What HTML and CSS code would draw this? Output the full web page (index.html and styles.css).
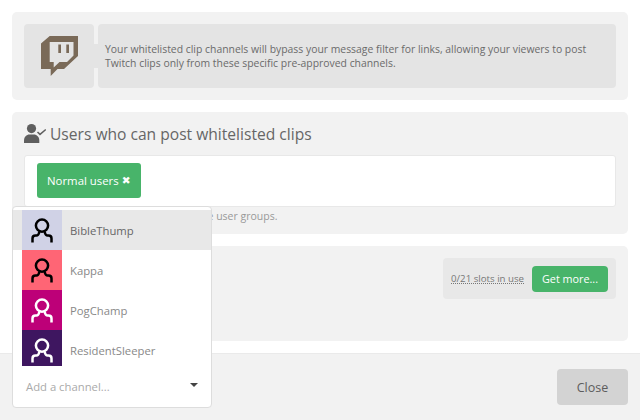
FILE: index.html
```html
<!DOCTYPE html>
<html lang="en">
<head>
<meta charset="utf-8">
<title>Whitelisted clips</title>
<link rel="stylesheet" href="styles.css">
</head>
<body>
<main class="content">
  <section class="card intro">
    <div class="intro-icon">
      <svg class="twitch" viewBox="0 0 37 40" aria-hidden="true">
        <path fill-rule="evenodd" d="M8.7 0H37V20L23 33H16.5L9.7 40V33H0V7.5ZM8.7 6V26H12.7V31.5L18.5 26H26L32.5 19.5V6ZM17.3 8.5H20V17H17.3ZM25.3 8.5H28V17H25.3Z"/>
      </svg>
    </div>
    <span class="intro-link"></span>
    <p class="intro-text">Your whitelisted clip channels will bypass your message filter for links, allowing your viewers to post Twitch clips only from these specific pre-approved channels.</p>
  </section>

  <section class="card users">
    <h2 class="heading">
      <svg class="user-check" viewBox="0 0 22 19" aria-hidden="true">
        <circle cx="7.5" cy="4.6" r="4.6"/>
        <path d="M0 19V16.5C0 13 2.5 10.6 5.5 10.6H9.8C12.8 10.6 15.3 13 15.3 16.5V19Z"/>
        <path class="tick" d="M13.5 8L16 10.4L21.8 5.5"/>
      </svg>
      Users who can post whitelisted clips
    </h2>
    <div class="tag-box">
      <span class="tag">Normal users <span class="tag-x">✖</span></span>
    </div>
    <p class="hint">Only allows clips sent by users in these user groups.</p>
  </section>

  <section class="card channels">
    <div class="slots">
      <span class="slots-text">0/21 slots in use</span>
      <button class="btn-green">Get more...</button>
    </div>
  </section>
</main>

<footer class="footer">
  <button class="btn-close">Close</button>
</footer>

<div class="dropdown">
  <ul class="options">
    <li class="option active">
      <span class="avatar av-1"><svg viewBox="0 0 40 40" aria-hidden="true"><use href="#person"/></svg></span>BibleThump
    </li>
    <li class="option">
      <span class="avatar av-2"><svg viewBox="0 0 40 40" aria-hidden="true"><use href="#person"/></svg></span>Kappa
    </li>
    <li class="option">
      <span class="avatar av-3"><svg viewBox="0 0 40 40" aria-hidden="true"><use href="#person"/></svg></span>PogChamp
    </li>
    <li class="option">
      <span class="avatar av-4"><svg viewBox="0 0 40 40" aria-hidden="true"><use href="#person"/></svg></span>ResidentSleeper
    </li>
  </ul>
  <div class="add-row">
    <span class="placeholder">Add a channel...</span>
    <span class="caret"></span>
  </div>
</div>

<svg class="defs" aria-hidden="true">
  <symbol id="person" viewBox="0 0 40 40">
    <g fill="none" stroke="currentColor" stroke-width="2.5">
      <circle cx="20" cy="15.6" r="6.1"/>
      <path d="M10.5 32.4V28.5Q10.5 25.6 13.5 25.6H14.5Q16.5 25.6 17.5 21.5M29.5 32.4V28.5Q29.5 25.6 26.5 25.6H25.5Q23.5 25.6 22.5 21.5"/>
    </g>
  </symbol>
</svg>
</body>
</html>
```
FILE: styles.css
```css
* { box-sizing: border-box; }
html, body { margin: 0; height: 420px; overflow: hidden; }
body {
  position: relative;
  background: #fff;
  color: #666;
  font-family: "Open Sans", "Liberation Sans", sans-serif;
  display: flex;
  flex-direction: column;
}
.content {
  flex: 1;
  padding: 12px;
  display: flex;
  flex-direction: column;
  gap: 12px;
}
.card {
  background: #f2f2f2;
  border-radius: 5px;
  padding: 12px;
}

/* intro */
.intro { height: 88px; display: flex; align-items: stretch; }
.intro-icon {
  width: 70px;
  background: #e4e4e4;
  border-radius: 4px;
  display: flex;
  align-items: center;
  justify-content: center;
}
.intro-link {
  width: 4px;
  height: 24px;
  align-self: center;
  background: #e4e4e4;
}
.twitch { width: 37px; height: 40px; fill: #7a6a58; }
.intro-text {
  flex: 1;
  margin: 0;
  background: #e4e4e4;
  border-radius: 4px;
  padding: 0 7px;
  display: flex;
  align-items: center;
  font-size: 10.4px;
  line-height: 14px;
  color: #6b6b6b;
}

/* users */
.users { height: 122px; padding-top: 0; }
.heading {
  margin: 0;
  height: 43px;
  display: flex;
  align-items: center;
  gap: 4px;
  font-size: 15.6px;
  font-weight: 400;
  color: #666;
}
.user-check { width: 22px; height: 19px; fill: #5f5f5f; }
.tick { fill: none; stroke: #5f5f5f; stroke-width: 1.5; }
.tag-box {
  height: 52px;
  background: #fff;
  border: 1px solid #e8e8e8;
  border-radius: 3px;
  padding: 7px 12px;
}
.tag {
  display: inline-flex;
  align-items: center;
  gap: 3px;
  height: 35px;
  width: 104px;
  padding: 0 0 0 10px;
  background: #48b46a;
  border-radius: 3px;
  color: #fff;
  font-size: 11.4px;
}
.tag-x { font-size: 10.5px; line-height: 1; font-family: "DejaVu Sans", sans-serif; }
.hint { margin: 2px 0 0; font-size: 10.5px; line-height: 14px; color: #999; }

/* channels */
.channels { height: 95px; display: flex; justify-content: flex-end; align-items: flex-start; }
.slots {
  width: 173px;
  height: 41px;
  background: #e8e8e8;
  border-radius: 4px;
  padding: 0 8px;
  display: flex;
  align-items: center;
  justify-content: space-between;
}
.slots-text {
  font-size: 9.7px;
  color: #777;
  text-decoration: underline dotted;
}
.btn-green {
  width: 76px;
  height: 26px;
  border: 0;
  border-radius: 4px;
  background: #48b46a;
  color: #fff;
  font: inherit;
  font-size: 10.8px;
  padding: 0;
}

/* footer */
.footer {
  height: 67px;
  background: #f2f2f2;
  border-top: 1px solid #eaeaea;
  padding: 15px 12px 0;
  display: flex;
  justify-content: flex-end;
  align-items: flex-start;
}
.btn-close {
  width: 71px;
  height: 36px;
  border: 0;
  border-radius: 4px;
  background: #d3d3d3;
  color: #5c5c5c;
  font: inherit;
  font-size: 12.5px;
  padding: 0;
}

/* dropdown menu */
.dropdown {
  position: absolute;
  left: 12px;
  top: 206px;
  width: 200px;
  height: 202px;
  background: #fff;
  border: 1px solid #ddd;
  border-radius: 4px;
}
.options { list-style: none; margin: 0; padding: 3px 0 0; height: 159px; overflow: hidden; }
.option {
  height: 40px;
  display: flex;
  align-items: center;
  gap: 8px;
  padding-left: 9px;
  font-size: 11.3px;
  color: #888;
}
.option.active { background: #e8e8e8; color: #666; }
.avatar { width: 40px; height: 40px; display: block; }
.avatar svg { width: 40px; height: 40px; display: block; }
.av-1 { background: #d0d2e6; color: #000; }
.av-2 { background: #ff6575; color: #000; }
.av-3 { background: #bd0078; color: #fff; }
.av-4 { background: #3e1660; color: #fff; }
.add-row {
  height: 41px;
  display: flex;
  align-items: center;
  justify-content: space-between;
  padding: 0 13px;
}
.placeholder { font-size: 11.3px; color: #aaa; }
.caret {
  width: 0;
  height: 0;
  margin-bottom: 3px;
  border-left: 4px solid transparent;
  border-right: 4px solid transparent;
  border-top: 4px solid #444;
}
.defs { position: absolute; width: 0; height: 0; }
```
